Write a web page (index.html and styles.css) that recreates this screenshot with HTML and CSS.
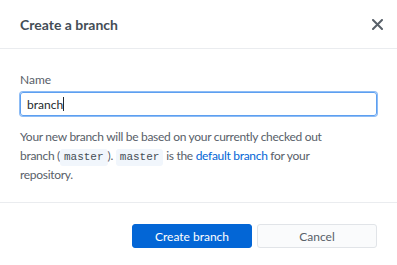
FILE: index.html
```html
<!DOCTYPE html>
<html lang="en">
<head>
  <meta charset="UTF-8" />
  <title>Create a branch</title>
  <link rel="stylesheet" href="styles.css">
</head>
<body>
  <div class="dialog">
    <header class="dialog-header">
      <h1>Create a branch</h1>
      <button class="close" aria-label="Close">
        <svg width="11" height="11" viewBox="0 0 11 11">
          <path d="M1 1L10 10M10 1L1 10" stroke="#586069" stroke-width="2" stroke-linecap="round"/>
        </svg>
      </button>
    </header>

    <div class="dialog-content">
      <label class="field-label" for="branch-name">Name</label>
      <div class="text-input"><span>branch</span><span class="caret"></span></div>
      <p class="note">
        Your new branch will be based on your currently checked out<br>
        branch (<code>master</code>). <code>master</code> is the
        <a href="#">default branch</a> for your<br>
        repository.
      </p>
    </div>

    <footer class="dialog-footer">
      <button class="btn btn-primary">Create branch</button>
      <button class="btn">Cancel</button>
    </footer>
  </div>
</body>
</html>
```

FILE: styles.css
```css
* {
  box-sizing: border-box;
  margin: 0;
  padding: 0;
}

body {
  background: #ffffff;
  font-family: Lato, 'Liberation Sans', sans-serif;
  font-size: 12px;
  color: #586069;
}

.dialog {
  width: 397px;
  height: 265px;
  display: flex;
  flex-direction: column;
}

.dialog-header {
  height: 49px;
  display: flex;
  align-items: center;
  justify-content: space-between;
  padding: 0 9px 0 20px;
  border-bottom: 1px solid #eaecef;
}

.dialog-header h1 {
  font-size: 14px;
  font-weight: 700;
  color: #444d56;
}

.close {
  width: 22px;
  height: 22px;
  border: none;
  background: none;
  display: flex;
  align-items: center;
  justify-content: center;
}

.dialog-content {
  padding: 23px 20px 18px;
  border-bottom: 1px solid #eaecef;
}

.field-label {
  display: block;
  line-height: 16px;
  margin-bottom: 4px;
  color: #586069;
}

.text-input {
  height: 24px;
  display: flex;
  align-items: center;
  padding: 0 6px;
  border: 1px solid #5d9ff0;
  border-radius: 3px;
  box-shadow: 0 0 0 1px #8dbcf5;
  color: #24292e;
}

.caret {
  width: 1px;
  height: 14px;
  background: #24292e;
}

.note {
  margin-top: 12px;
  line-height: 18.5px;
  letter-spacing: -0.3px;
  white-space: nowrap;
}

.note code {
  display: inline-block;
  font-family: 'Liberation Mono', 'DejaVu Sans Mono', monospace;
  font-size: 11px;
  line-height: 17px;
  letter-spacing: 0;
  background: #f1f6fc;
  border-radius: 3px;
  padding: 0 4px;
  color: #444d56;
}

.note a {
  color: #0366d6;
  text-decoration: none;
}

.dialog-footer {
  display: flex;
  justify-content: flex-end;
  gap: 5px;
  padding: 21px 20px 0;
}

.btn {
  width: 120px;
  height: 24px;
  font-family: inherit;
  font-size: 12px;
  color: #586069;
  background: #fafbfc;
  border: 1px solid #e1e4e8;
  border-radius: 3px;
}

.btn-primary {
  background: #0366d6;
  border-color: #0366d6;
  color: #ffffff;
}
```
